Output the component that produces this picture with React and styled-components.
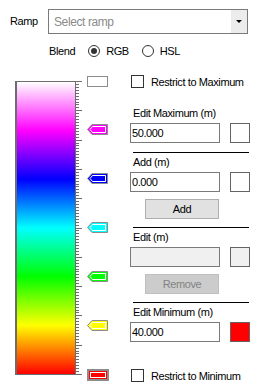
import React from 'react';
import styled, { createGlobalStyle } from 'styled-components';

const GlobalStyle = createGlobalStyle`
  html, body {
    margin: 0;
    padding: 0;
    background: #ffffff;
  }
  body {
    font-family: 'Liberation Sans', Arial, sans-serif;
    font-size: 11px;
    letter-spacing: -0.4px;
    color: #000000;
  }
`;

const Page = styled.div`
  width: 266px;
  height: 392px;
  padding-top: 9px;
  box-sizing: border-box;
  overflow: hidden;
`;

const TopRow = styled.div`
  display: flex;
  align-items: center;
  height: 25px;
`;

const RampLabel = styled.span`
  width: 38px;
  padding-left: 10px;
  line-height: 13px;
`;

const Select = styled.div`
  width: 200px;
  height: 25px;
  box-sizing: border-box;
  border: 1px solid #7a7a7a;
  display: flex;
  align-items: stretch;
`;

const Placeholder = styled.span`
  flex: 1;
  padding-left: 5px;
  display: flex;
  align-items: center;
  font-size: 12px;
  color: #8a8a8a;
`;

const DropButton = styled.span`
  width: 16px;
  background: #ececec;
  display: flex;
  align-items: center;
  justify-content: center;

  &::after {
    content: '';
    border-left: 3px solid transparent;
    border-right: 3px solid transparent;
    border-top: 3px solid #000;
  }
`;

const BlendRow = styled.div`
  display: flex;
  align-items: center;
  height: 14px;
  margin-top: 10px;
  padding-left: 49px;
`;

const BlendLabel = styled.span`
  margin-right: 13px;
`;

const Radio = styled.span`
  width: 12px;
  height: 12px;
  box-sizing: border-box;
  border: 1px solid #333;
  border-radius: 50%;
  display: flex;
  align-items: center;
  justify-content: center;
  margin-right: 6px;

  &::after {
    content: '';
    width: 6px;
    height: 6px;
    border-radius: 50%;
    background: ${(p) => (p.$checked ? '#333' : 'transparent')};
  }
`;

const RadioText = styled.span`
  margin-right: 13px;
`;

const Body = styled.div`
  display: flex;
  margin-top: 16px;
`;

const RampArea = styled.div`
  width: 130px;
  display: flex;
  align-items: flex-start;
  padding: 7px 0 0 15px;
  box-sizing: border-box;
`;

const Bar = styled.div`
  width: 60px;
  height: 294px;
  box-sizing: border-box;
  border: 1px solid #6d6d6d;
  border-left-width: 2px;
  border-right: none;
  background: linear-gradient(
    to bottom,
    #ffffff 0%,
    #ff00ff 16.67%,
    #0000ff 33.33%,
    #00ffff 50%,
    #00ff00 66.67%,
    #ffff00 83.33%,
    #ff0000 100%
  );
`;

const MarkerTrack = styled.div`
  position: relative;
  width: 24px;
  height: 310px;
  margin-top: -7px;
  margin-left: 4px;
`;

const MarkerSlot = styled.div`
  position: absolute;
  left: 0;
  width: 22px;
  height: 12px;
  line-height: 0;
`;

const Panel = styled.div`
  width: 122px;
  display: flex;
  flex-direction: column;
`;

const CheckRow = styled.label`
  display: flex;
  align-items: center;
  height: 13px;
  margin-top: ${(p) => p.$top || 0}px;
  padding-left: 1px;
`;

const Checkbox = styled.span`
  width: 13px;
  height: 13px;
  box-sizing: border-box;
  border: 1px solid #333;
  background: #fff;
  margin-right: 7px;
`;

const FieldLabel = styled.div`
  line-height: 13px;
  height: 13px;
  padding-left: 3px;
  margin-top: ${(p) => p.$top || 0}px;
`;

const FieldRow = styled.div`
  display: flex;
  gap: 10px;
  margin-top: 3px;
`;

const Input = styled.div`
  width: 90px;
  height: 20px;
  box-sizing: border-box;
  border: 1px solid #7a7a7a;
  background: ${(p) => (p.$disabled ? '#f0f0f0' : '#ffffff')};
  display: flex;
  align-items: center;
  padding-left: 1px;
`;

const Swatch = styled.div`
  width: 20px;
  height: 20px;
  box-sizing: border-box;
  border: 1px solid #646464;
  background: ${(p) => p.$color};
`;

const Button = styled.div`
  width: 74px;
  height: 20px;
  box-sizing: border-box;
  margin: 7px 0 0 15px;
  border: 1px solid ${(p) => (p.$disabled ? '#bfbfbf' : '#adadad')};
  background: ${(p) => (p.$disabled ? '#cccccc' : '#e1e1e1')};
  color: ${(p) => (p.$disabled ? '#838383' : '#000000')};
  display: flex;
  align-items: center;
  justify-content: center;
`;

const Separator = styled.div`
  height: 1px;
  width: 116px;
  margin: ${(p) => p.$top || 8}px 0 0 3px;
  background: #000;
`;

function Ticks() {
  const lines = [];
  const step = 293 / 100;
  for (let i = 0; i <= 100; i++) {
    const y = 0.5 + i * step;
    const len = i % 10 === 0 ? 7 : 4;
    lines.push(<line key={i} x1="0" x2={len} y1={y} y2={y} />);
  }
  return (
    <svg width="8" height="295" style={{ display: 'block' }}>
      <g stroke="#6d6d6d" strokeWidth="1" shapeRendering="crispEdges">
        <line x1="0.5" x2="0.5" y1="0" y2="294" />
        {lines}
      </g>
    </svg>
  );
}

function Marker({ color, kind }) {
  if (kind === 'end') {
    return (
      <svg width="22" height="12">
        <rect x="0.5" y="0.5" width="20" height="10" fill="#fff" stroke="#8c8c8c" />
      </svg>
    );
  }
  if (kind === 'selected') {
    return (
      <svg width="22" height="12">
        <rect x="0" y="0" width="22" height="12" fill="#8c8c8c" />
        <rect x="2" y="2" width="18" height="8" fill={color} />
        <rect x="3.5" y="3.5" width="15" height="5" fill={color} stroke="#fff" />
      </svg>
    );
  }
  return (
    <svg width="22" height="12">
      <path d="M5 0.5 H20.5 V10.5 H5 L0.5 5.5 Z" fill={color} stroke="#8c8c8c" />
      <path d="M5.5 2.5 H18.5 V8.5 H5.5 L3 5.5 Z" fill={color} stroke="#fff" />
    </svg>
  );
}

const stops = [
  { v: 0, color: '#ffffff', kind: 'end' },
  { v: 1 / 6, color: '#ff00ff' },
  { v: 2 / 6, color: '#0000ff' },
  { v: 3 / 6, color: '#00ffff' },
  { v: 4 / 6, color: '#00ff00' },
  { v: 5 / 6, color: '#ffff00' },
  { v: 1, color: '#ff0000', kind: 'selected' },
];

export default function App() {
  return (
    <>
      <GlobalStyle />
      <Page>
        <TopRow>
          <RampLabel>Ramp</RampLabel>
          <Select>
            <Placeholder>Select ramp</Placeholder>
            <DropButton />
          </Select>
        </TopRow>

        <BlendRow>
          <BlendLabel>Blend</BlendLabel>
          <Radio $checked />
          <RadioText>RGB</RadioText>
          <Radio />
          <RadioText>HSL</RadioText>
        </BlendRow>

        <Body>
          <RampArea>
            <Bar />
            <Ticks />
            <MarkerTrack>
              {stops.map((s) => (
                <MarkerSlot key={s.v} style={{ top: Math.round(1.5 + s.v * 293) }}>
                  <Marker color={s.color} kind={s.kind} />
                </MarkerSlot>
              ))}
            </MarkerTrack>
          </RampArea>

          <Panel>
            <CheckRow $top={1}>
              <Checkbox />
              Restrict to Maximum
            </CheckRow>

            <FieldLabel $top={19}>Edit Maximum (m)</FieldLabel>
            <FieldRow>
              <Input>50.000</Input>
              <Swatch $color="#ffffff" />
            </FieldRow>
            <Separator $top={9} />

            <FieldLabel $top={3}>Add (m)</FieldLabel>
            <FieldRow>
              <Input>0.000</Input>
              <Swatch $color="#ffffff" />
            </FieldRow>
            <Button>Add</Button>
            <Separator />

            <FieldLabel $top={3}>Edit (m)</FieldLabel>
            <FieldRow>
              <Input $disabled />
              <Swatch $color="#f0f0f0" />
            </FieldRow>
            <Button $disabled>Remove</Button>
            <Separator />

            <FieldLabel $top={3}>Edit Minimum (m)</FieldLabel>
            <FieldRow>
              <Input>40.000</Input>
              <Swatch $color="#ff0000" />
            </FieldRow>

            <CheckRow $top={27}>
              <Checkbox />
              Restrict to Minimum
            </CheckRow>
          </Panel>
        </Body>
      </Page>
    </>
  );
}
